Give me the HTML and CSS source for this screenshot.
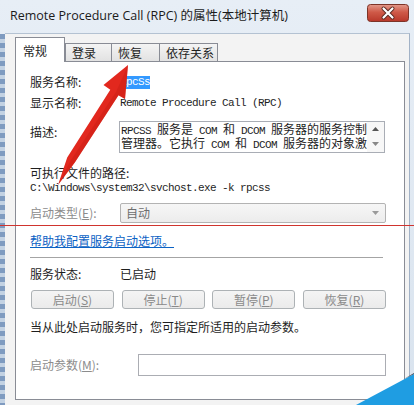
FILE: index.html
```html
<!DOCTYPE html>
<html lang="zh-CN">
<head>
    <meta charset="UTF-8">
    <title>Remote Procedure Call (RPC) 的属性</title>
    <link rel="stylesheet" href="styles.css">
</head>
<body>
    <div class="window">
        <div class="titlebar">
            <span class="title">Remote Procedure Call (RPC) 的属性(本地计算机)</span>
            <div class="close">
                <svg width="42" height="18" viewBox="0 0 42 18">
                    <defs>
                        <linearGradient id="closeBg" x1="0" y1="0" x2="0" y2="1">
                            <stop offset="0" stop-color="#e39a8c"/>
                            <stop offset="0.45" stop-color="#cf5a48"/>
                            <stop offset="1" stop-color="#b8382a"/>
                        </linearGradient>
                    </defs>
                    <rect x="0.5" y="0.5" width="41" height="17" rx="3" fill="url(#closeBg)" stroke="#7d3428"/>
                    <path d="M16.5 4.5 L25.5 13.5 M25.5 4.5 L16.5 13.5" stroke="#5a2a22" stroke-width="4" stroke-linecap="round"/>
                    <path d="M16.5 4.5 L25.5 13.5 M25.5 4.5 L16.5 13.5" stroke="#fff" stroke-width="2.2" stroke-linecap="round"/>
                </svg>
            </div>
        </div>

        <div class="dialog">
            <div class="tabs">
                <div class="tab active">常规</div>
                <div class="tab tab-login">登录</div>
                <div class="tab tab-recover">恢复</div>
                <div class="tab tab-deps">依存关系</div>
            </div>

            <div class="panel">
                <div class="row">
                    <span class="label">服务名称:</span>
                    <span class="mono"><span class="sel">RpcSs</span></span>
                </div>
                <div class="row row-display">
                    <span class="label">显示名称:</span>
                    <span class="mono">Remote Procedure Call (RPC)</span>
                </div>
                <div class="row row-desc">
                    <span class="label label-desc">描述:</span>
                    <div class="textbox">
                        <div class="textbox-text mono">
                            <div>RPCSS <span class="cn">服务是</span> COM <span class="cn">和</span> DCOM <span class="cn">服务器的服务控制</span></div>
                            <div><span class="cn">管理器。它执行</span> COM <span class="cn">和</span> DCOM <span class="cn">服务器的对象激</span></div>
                        </div>
                        <div class="scroll">
                            <svg width="7" height="4" viewBox="0 0 7 4"><path d="M0 4 L3.5 0 L7 4 Z" fill="#555"/></svg>
                            <svg width="7" height="4" viewBox="0 0 7 4"><path d="M0 0 L3.5 4 L7 0 Z" fill="#888"/></svg>
                        </div>
                    </div>
                </div>
                <div class="row row-path-label">可执行文件的路径:</div>
                <div class="row mono path">C:\Windows\system32\svchost.exe -k rpcss</div>
                <div class="row row-startup">
                    <span class="label muted">启动类型(<u>E</u>):</span>
                    <div class="combo">
                        <span>自动</span>
                        <svg width="7" height="4" viewBox="0 0 7 4"><path d="M0 0 L3.5 4 L7 0 Z" fill="#9a9a9a"/></svg>
                    </div>
                </div>
                <a class="help-link" href="#">帮助我配置服务启动选项。</a>
                <div class="separator"></div>
                <div class="row row-status">
                    <span class="label">服务状态:</span>
                    <span>已启动</span>
                </div>
                <div class="buttons">
                    <button>启动(<u>S</u>)</button>
                    <button>停止(<u>T</u>)</button>
                    <button>暂停(<u>P</u>)</button>
                    <button>恢复(<u>R</u>)</button>
                </div>
                <p class="hint">当从此处启动服务时，您可指定所适用的启动参数。</p>
                <div class="row row-param">
                    <span class="label label-param muted">启动参数(<u>M</u>):</span>
                    <div class="param-input"></div>
                </div>
            </div>
        </div>

        <div class="red-line"></div>

        <svg class="arrow" width="414" height="405" viewBox="0 0 414 405">
            <polygon points="128,65 125,99 118.5,95.2 74.8,162.4 58,185 67.2,157.6 110.3,89.8 103.5,85" fill="#e2281e"/>
            <polygon points="128,65 125,99 118.5,95.2 74.8,162.4 58,185 71,160 116,92" fill="#c81c14" opacity="0.45"/>
        </svg>

        <svg class="corner" width="60" height="32" viewBox="0 0 60 32">
            <polygon points="2,32 60,1 60,32" fill="#1f9de2"/>
            <polygon points="50,6 60,0 60,1" fill="#3a4350"/>
        </svg>
    </div>
</body>
</html>
```

FILE: styles.css
```css
* {
    box-sizing: border-box;
}

body {
    margin: 0;
    font-family: "Noto Sans CJK SC", sans-serif;
    font-size: 12px;
    color: #1e1e1e;
}

.window {
    position: relative;
    width: 414px;
    height: 405px;
    overflow: hidden;
    padding: 0 4px 0 5px;
    background-image:
        repeating-linear-gradient(#7f9bc0 0 5px, #c3d2e3 5px 9px),
        linear-gradient(#e7eef6, #d9e3ee);
    background-size: 5px 100%, auto;
    background-position: 0 34px, 0 0;
    background-repeat: no-repeat;
}

/* title bar */
.titlebar {
    display: flex;
    align-items: flex-start;
    height: 33px;
    padding-left: 5px;
}

.title {
    margin-top: 8px;
    font: 12.5px/16px "Open Sans", "Noto Sans CJK SC", sans-serif;
    color: #1b1b1b;
}

.close {
    margin: 4px 1px 0 auto;
    height: 18px;
}

.close svg {
    display: block;
}

/* dialog body */
.dialog {
    height: 372px;
    background: #f3f3f3;
    border-top: 1px solid #b4c2d2;
    border-right: 1px solid #a2b2c6;
    padding: 2px 0 0 10px;
}

.tabs {
    display: flex;
    align-items: flex-end;
    height: 25px;
    position: relative;
    z-index: 1;
}

.tab {
    height: 18px;
    padding: 1px 0 0 6px;
    line-height: 16px;
    border: 1px solid #898c95;
    border-bottom: none;
    background: linear-gradient(#f4f4f4, #e2e2e2);
}

.tab.active {
    width: 50px;
    height: 25px;
    margin-bottom: -1px;
    padding: 5px 0 0 7px;
    background: #fff;
}

.tab-login {
    width: 47px;
}

.tab-recover {
    width: 49px;
    margin-left: -1px;
}

.tab-deps {
    width: 59px;
    margin-left: -1px;
}

.panel {
    width: 390px;
    height: 339px;
    border: 1px solid #898c95;
    background: #fff;
    padding: 12px 18px 0 14px;
}

.row {
    display: flex;
    align-items: center;
    line-height: 16px;
}

.label {
    width: 90px;
    flex: none;
}

.muted {
    color: #8c8c8c;
}

.mono {
    font-family: "Liberation Mono", monospace;
    font-size: 11px;
    letter-spacing: -0.6px;
    white-space: nowrap;
}

.mono .cn {
    font-family: "Noto Sans CJK SC", sans-serif;
    font-size: 12px;
    letter-spacing: 0;
}

.sel {
    display: inline-block;
    background: #3399ff;
    color: #fff;
    line-height: 13px;
}

.row-display {
    margin-top: 5px;
}

.row-desc {
    align-items: flex-start;
    margin-top: 10px;
}

.label-desc {
    width: 89px;
    margin-top: 3px;
}

.textbox {
    display: flex;
    width: 266px;
    height: 32px;
    border: 1px solid #a9adb5;
}

.textbox-text {
    flex: 1;
    padding: 1px 0 0 1px;
    line-height: 12px;
}

.scroll {
    width: 17px;
    flex: none;
    display: flex;
    flex-direction: column;
    align-items: center;
    justify-content: space-between;
    padding: 5px 0 6px;
    background: #f7f7f7;
}

.scroll svg {
    display: block;
}

.row-path-label {
    margin-top: 12px;
}

.path {
    line-height: 14px;
}

.row-startup {
    margin-top: 8px;
}

.combo {
    display: flex;
    align-items: center;
    justify-content: space-between;
    width: 266px;
    height: 20px;
    padding: 0 6px 0 5px;
    border: 1px solid #b3b3b3;
    border-radius: 2px;
    background: linear-gradient(#f6f6f6, #ececec);
    color: #6e6e6e;
}

.help-link {
    display: block;
    margin-top: 10px;
    line-height: 16px;
    color: #0b62c4;
    text-decoration: underline;
}

.separator {
    width: 353px;
    height: 1px;
    margin-top: 8px;
    background: #a4a4a4;
}

.row-status {
    margin-top: 8px;
}

.buttons {
    display: flex;
    justify-content: space-between;
    width: 355px;
    margin: 8px 0 0 1px;
}

.buttons button {
    width: 83px;
    height: 19px;
    padding: 0;
    font-family: inherit;
    font-size: 12px;
    line-height: 16px;
    color: #8a8a8a;
    border: 1px solid #adb2b5;
    border-radius: 3px;
    background: linear-gradient(#f4f4f4, #ebebeb);
}

.hint {
    margin: 10px 0 0;
    line-height: 16px;
}

.row-param {
    margin-top: 19px;
}

.label-param {
    width: 108px;
}

.param-input {
    width: 248px;
    height: 22px;
    border: 1px solid #abadb3;
    background: #fff;
}

/* annotations drawn over the screenshot */
.red-line {
    position: absolute;
    left: 0;
    top: 225px;
    width: 414px;
    height: 1px;
    background: #d0342e;
}

.arrow {
    position: absolute;
    left: 0;
    top: 0;
    pointer-events: none;
}

.corner {
    position: absolute;
    right: 0;
    bottom: 0;
}
```
